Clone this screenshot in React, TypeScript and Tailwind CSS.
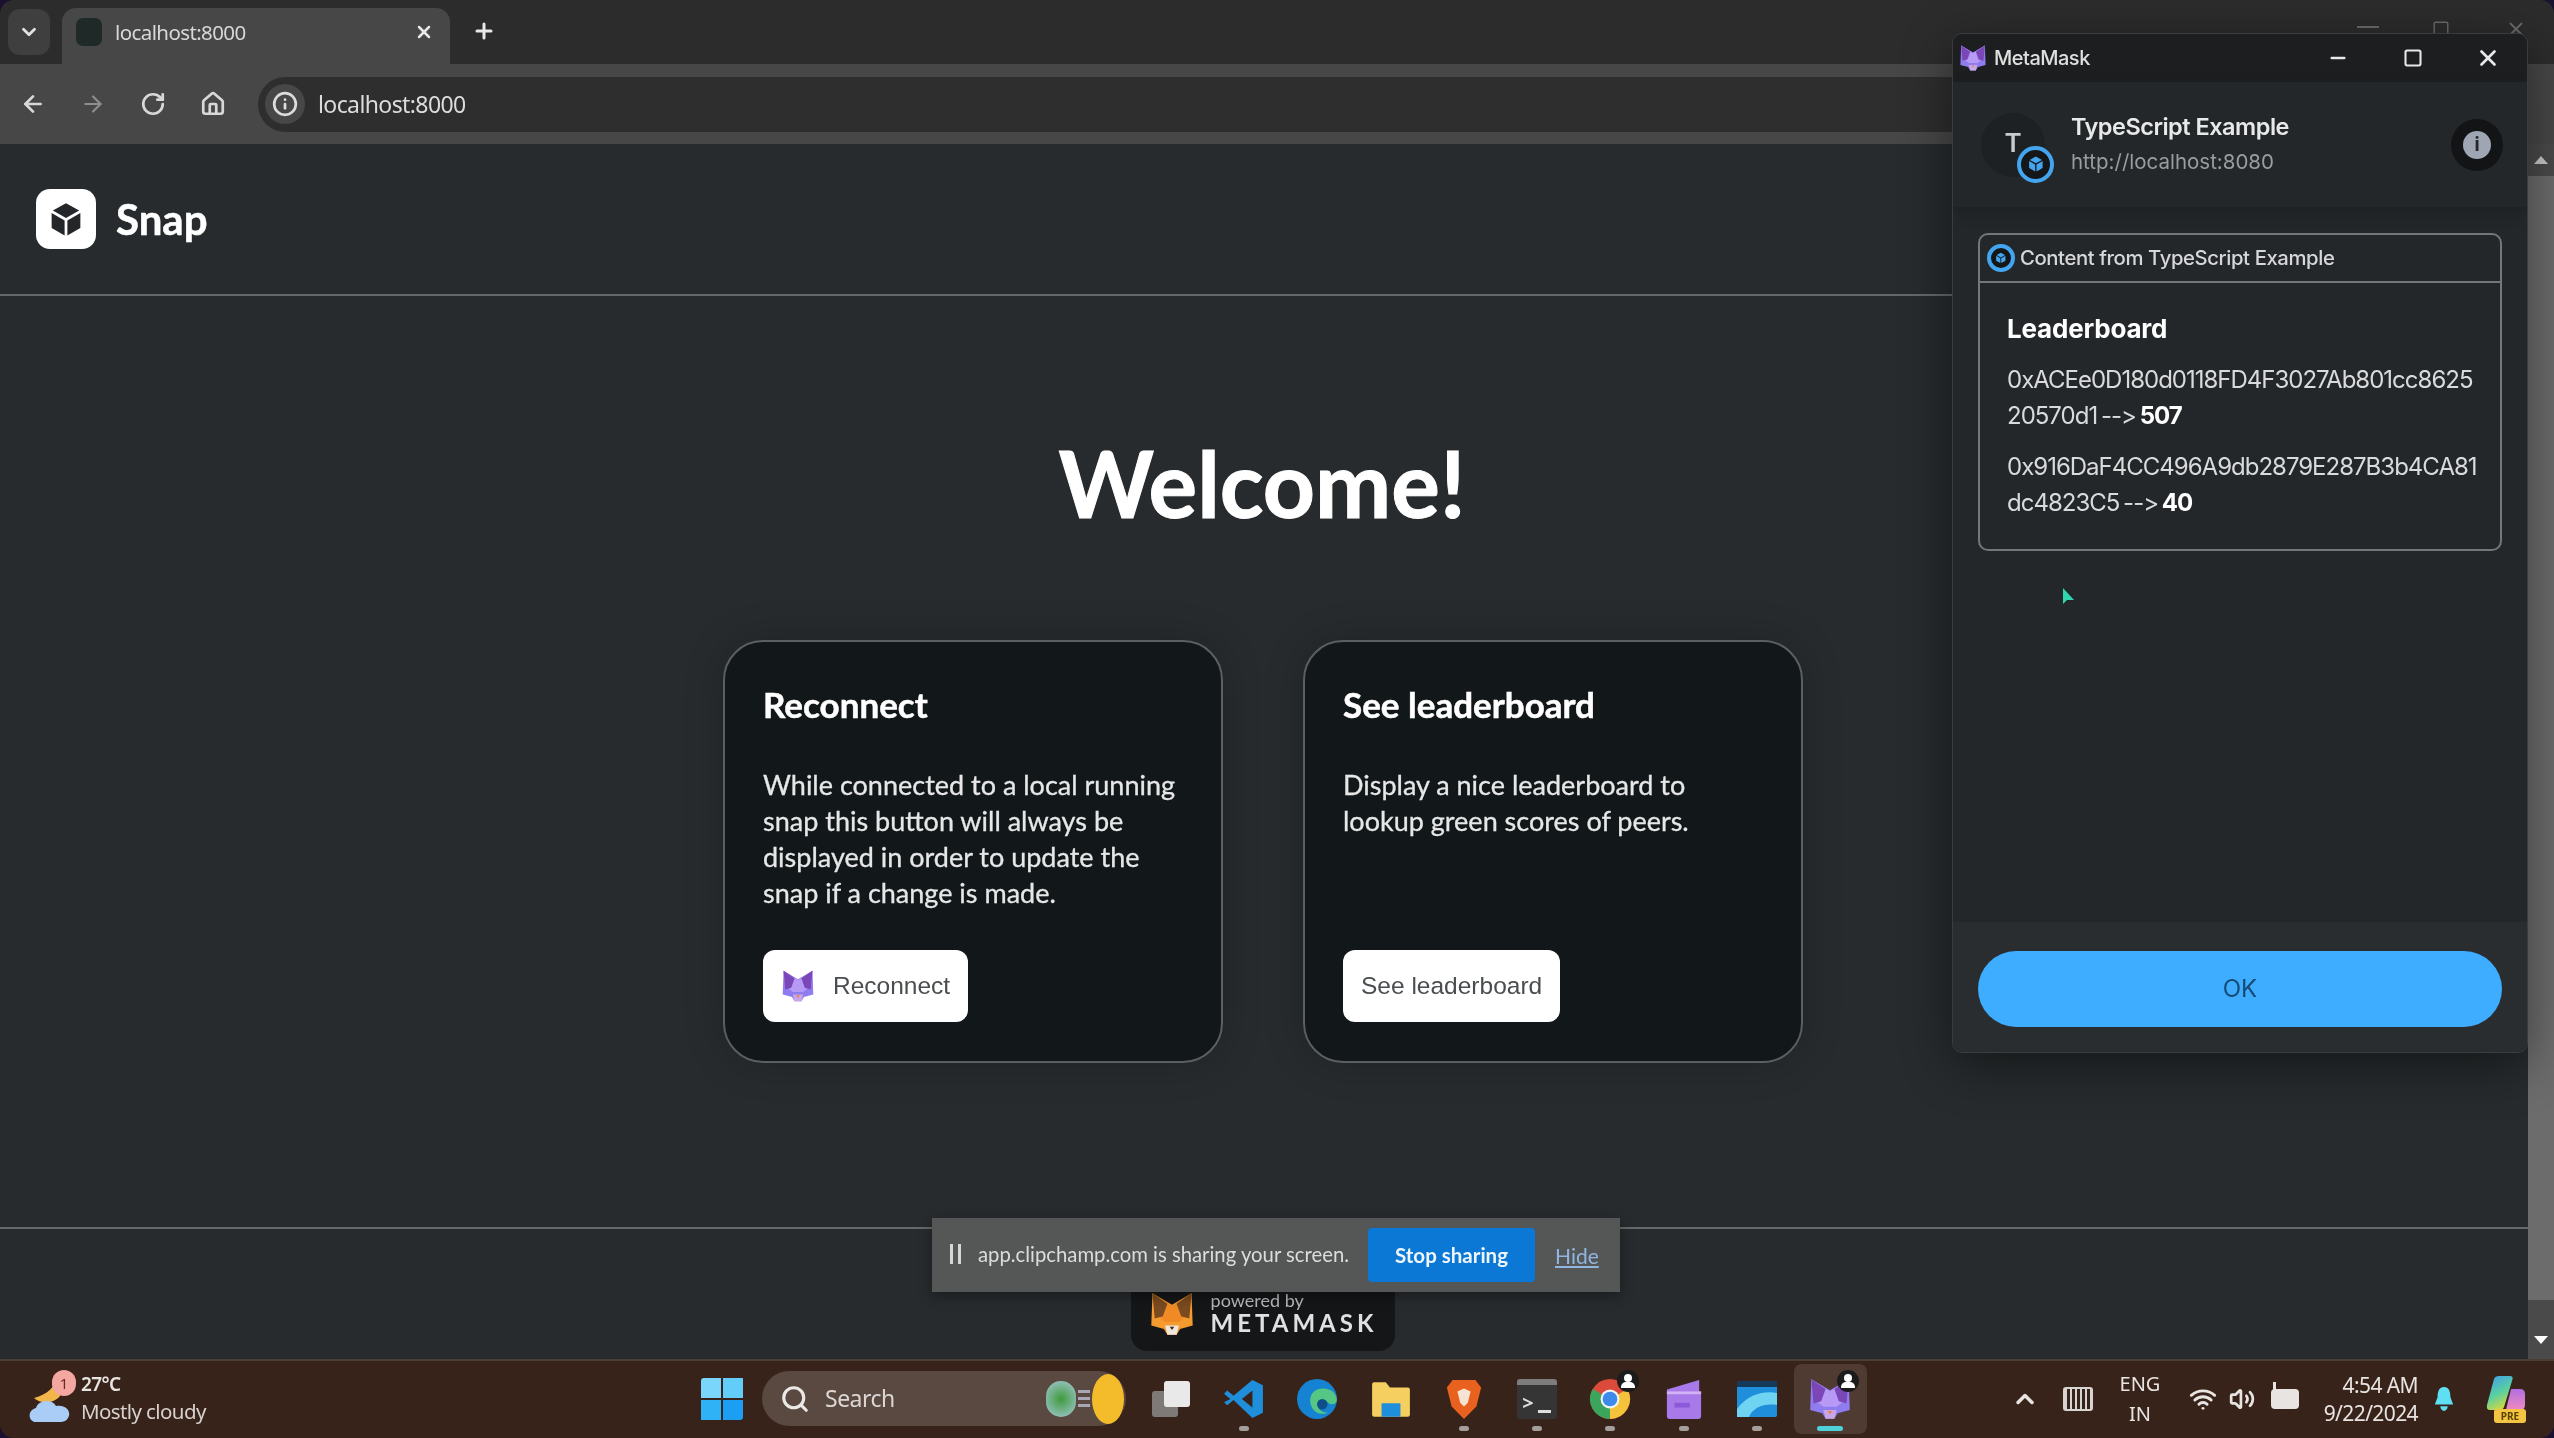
import { ArrowLeft, ArrowRight, ChevronDown, ChevronUp, Home, Info, Minus, Plus, RotateCw, Search, Square, Volume2, Wifi, X } from "lucide-react";

function CubeIcon({ className, color }: { className: string; color: string }) {
  return (
    <svg viewBox="0 0 24 24" className={className}>
      <polygon points="12,3 19.5,7.2 12,11.4 4.5,7.2" fill={color} />
      <polygon points="3.8,8.6 11.2,12.8 11.2,21.4 3.8,17.1" fill={color} />
      <polygon points="20.2,8.6 12.8,12.8 12.8,21.4 20.2,17.1" fill={color} />
    </svg>
  );
}

function FoxIcon({ className, orange }: { className: string; orange?: boolean }) {
  const ear = orange ? "#7a4a20" : "#7b46b8";
  const face = orange ? "#ef8a24" : "#b79af5";
  const low = orange ? "#f59a2e" : "#8f7df0";
  const muzzle = orange ? "#efe6dc" : "#c9a6e8";
  const nose = orange ? "#3a2a20" : "#ef7f3a";
  return (
    <svg viewBox="0 0 40 40" className={className}>
      <polygon points="3,2 20,12 37,2 38,30 27,33 24,38 16,38 13,33 2,30" fill={low} />
      <polygon points="3,2 20,13 37,2 35,20 26,27 14,27 5,20" fill={face} />
      <polygon points="3,2 16,11 12,22 5,24" fill={ear} />
      <polygon points="37,2 24,11 28,22 35,24" fill={ear} />
      <polygon points="14,30 26,30 24,38 16,38" fill={muzzle} />
      <polygon points="18,31 22,31 20,34" fill={nose} />
    </svg>
  );
}

function SnapBadge({ size }: { size: string }) {
  return (
    <div className={`${size} flex items-center justify-center rounded-full bg-[#141618] border-[4px] border-[#43a5f0]`}>
      <CubeIcon className="w-[68%] h-[68%]" color="#43a5f0" />
    </div>
  );
}

function ActionCard({ title, lines, button, fox }: { title: string; lines: string[]; button: string; fox?: boolean }) {
  return (
    <div className="w-[500px] h-[423px] rounded-[40px] border-2 border-[#5c5f61] bg-[#12171a] px-[38px] pt-[40px] shadow-[0_0_40px_rgba(0,0,0,0.18)] flex flex-col items-start">
      <h2 className="text-[35px] leading-[44px] font-bold text-white [-webkit-text-stroke:0.5px_white]">{title}</h2>
      <div className="mt-[41px] h-[144px] text-[27px] leading-[36px] text-[#e6e7e7] [-webkit-text-stroke:0.3px_#e6e7e7]">
        {lines.map((line) => (
          <p key={line}>{line}</p>
        ))}
      </div>
      <button className="mt-[39px] h-[72px] rounded-[12px] bg-white flex items-center px-[18px] text-[24.5px] text-[#4a4d4f] [font-family:'Liberation_Sans',sans-serif]">
        {fox && <FoxIcon className="w-[34px] h-[34px] mr-[18px]" />}
        {button}
      </button>
    </div>
  );
}

function TaskIcon({ children, dot, active }: { children: React.ReactNode; dot?: boolean; active?: boolean }) {
  return (
    <div className={`relative w-[73.3px] h-[70px] flex items-center justify-center rounded-[8px] ${active ? "bg-[#503b33]" : ""}`}>
      {children}
      {dot && <span className="absolute bottom-[3px] w-[10px] h-[5px] rounded-full bg-[#a59f9b]" />}
      {active && <span className="absolute bottom-[3px] w-[26px] h-[5px] rounded-full bg-[#4fd1d9]" />}
    </div>
  );
}

function ProfileBadge() {
  return (
    <span className="absolute right-[8px] top-[6px] w-[22px] h-[22px] rounded-full bg-[#1b1b1b] flex flex-col items-center justify-center">
      <span className="w-[8px] h-[8px] rounded-full bg-white" />
      <span className="w-[14px] h-[6px] rounded-t-[5px] bg-white" />
    </span>
  );
}

export default function App() {
  return (
    <div className="relative w-[2554px] h-[1438px] overflow-hidden bg-[#1a1030] flex flex-col blur-[0.6px] [font-family:Lato,sans-serif]">
      {/* browser chrome */}
      <div className="h-[64px] bg-[#2c2c2c] flex items-end pl-[8px] rounded-t-[14px]">
        <div className="w-[42px] h-[46px] mb-[9px] rounded-[12px] bg-[#3f3f3f] flex items-center justify-center">
          <ChevronDown className="w-[22px] h-[22px] text-[#e2e2e2]" strokeWidth={3} />
        </div>
        <div className="ml-[12px] w-[388px] h-[56px] rounded-t-[14px] bg-[#474747] flex items-center pl-[14px] pr-[16px] pb-[8px]">
          <span className="w-[26px] h-[28px] rounded-[7px] bg-[#1f2a28]" />
          <span className="ml-[13px] text-[20.5px] tracking-[-0.6px] text-[#d8d8d8] [font-family:'Noto_Sans',sans-serif]">localhost:8000</span>
          <X className="ml-auto w-[20px] h-[20px] text-[#e8e8e8]" strokeWidth={3} />
        </div>
        <Plus className="ml-[22px] mb-[21px] w-[24px] h-[24px] text-[#e8e8e8]" strokeWidth={3} />
      </div>
      <div className="h-[80px] bg-[#474747] flex items-center pl-[20px] pr-[110px]">
        <ArrowLeft className="w-[26px] h-[26px] text-[#d8d8d8]" strokeWidth={2.5} />
        <ArrowRight className="ml-[34px] w-[26px] h-[26px] text-[#8e8e8e]" strokeWidth={2} />
        <RotateCw className="ml-[34px] w-[26px] h-[26px] text-[#d8d8d8]" strokeWidth={2.5} />
        <Home className="ml-[34px] w-[26px] h-[26px] text-[#d8d8d8]" strokeWidth={2.5} />
        <div className="ml-[32px] flex-1 h-[55px] rounded-full bg-[#2e2e2e] flex items-center pl-[7px]">
          <span className="w-[40px] h-[40px] rounded-full bg-[#474747] flex items-center justify-center">
            <Info className="w-[26px] h-[26px] text-[#dcdcdc]" strokeWidth={2.5} />
          </span>
          <span className="ml-[13px] text-[23px] tracking-[-0.6px] text-[#dcdcdc] [font-family:'Noto_Sans',sans-serif]">localhost:8000</span>
        </div>
      </div>

      {/* page + scrollbar */}
      <div className="flex-1 flex min-h-0">
        <div className="flex-1 bg-[#272b2d] flex flex-col">
          <header className="h-[152px] border-b-2 border-[#64686a] flex items-center pl-[36px]">
            <div className="w-[60px] h-[60px] rounded-[14px] bg-white flex items-center justify-center">
              <CubeIcon className="w-[42px] h-[42px]" color="#24272a" />
            </div>
            <span className="ml-[20px] text-[42px] font-bold text-white [-webkit-text-stroke:0.5px_white]">Snap</span>
          </header>
          <main className="flex-1 flex flex-col items-center">
            <h1 className="mt-[132px] -ml-[4px] text-[91px] leading-[110px] font-bold text-white [-webkit-text-stroke:1px_white]">Welcome!</h1>
            <div className="mt-[102px] -ml-[2px] flex gap-[80px]">
              <ActionCard
                title="Reconnect"
                lines={["While connected to a local running", "snap this button will always be", "displayed in order to update the", "snap if a change is made."]}
                button="Reconnect"
                fox
              />
              <ActionCard
                title="See leaderboard"
                lines={["Display a nice leaderboard to", "lookup green scores of peers."]}
                button="See leaderboard"
              />
            </div>
          </main>
          <footer className="h-[132px] border-t-2 border-[#64686a] flex justify-center items-end pb-[8px]">
            <div className="w-[264px] h-[80px] -ml-[2px] rounded-b-[16px] bg-[#141618] flex items-end justify-center pb-[14px] gap-[16px]">
              <FoxIcon className="w-[46px] h-[46px]" orange />
              <div className="flex flex-col text-[#dfe0e0]">
                <span className="text-[18px] leading-[18px] text-[#b8b8b8]">powered by</span>
                <span className="text-[24px] leading-[28px] font-bold tracking-[4px]">METAMASK</span>
              </div>
            </div>
          </footer>
        </div>
        <div className="w-[26px] bg-[#4a4a4a] flex flex-col items-center">
          <span className="mt-[12px] w-0 h-0 border-x-[7px] border-x-transparent border-b-[8px] border-b-[#c8c8c8]" />
          <span className="mt-[12px] w-full h-[1124px] bg-[#6c6c6c]" />
          <span className="mt-[36px] w-0 h-0 border-x-[7px] border-x-transparent border-t-[8px] border-t-white" />
        </div>
      </div>

      {/* taskbar */}
      <div className="h-[79px] pb-[2px] bg-[#38231b] border-t-2 border-[#4b3e38] flex items-center text-[#e8e4e1] rounded-b-[14px] [font-family:'Noto_Sans',sans-serif]">
        <div className="w-[701px] flex items-center pl-[28px]">
          <div className="relative w-[44px] h-[50px]">
            <svg viewBox="0 0 44 50" className="absolute inset-0 w-[44px] h-[50px]">
              <path d="M30 2 C26 14 20 20 6 24 C12 30 26 30 32 22Z" fill="#f3b64b" />
              <path d="M8 48 C0 48 -1 36 8 34 C10 26 24 24 28 32 C38 30 44 38 40 44 C38 48 34 48 30 48Z" fill="#a9cdf7" />
            </svg>
            <span className="absolute left-[24px] -top-[4px] w-[24px] h-[26px] rounded-full bg-[#f4a6a0] text-[#6a2a26] text-[15px] leading-[26px] text-center">1</span>
          </div>
          <div className="ml-[9px] flex flex-col -mt-[2px]">
            <span className="text-[19px] leading-[27px] font-semibold tracking-[-0.6px]">27°C</span>
            <span className="text-[20.5px] leading-[27px] text-[#d6d2cf] tracking-[-0.6px]">Mostly cloudy</span>
          </div>
        </div>
        <div className="w-[42px] h-[42px] grid grid-cols-2 gap-[2px]">
          <span className="bg-[#7ad7fb] rounded-tl-[3px]" />
          <span className="bg-[#62cdf9]" />
          <span className="bg-[#2fb3f6]" />
          <span className="bg-[#1c9ff2] rounded-br-[3px]" />
        </div>
        <div className="ml-[19px] w-[364px] h-[55px] rounded-full bg-[#5a4941] flex items-center pl-[18px]">
          <Search className="w-[30px] h-[30px] text-[#ece8e6]" strokeWidth={2.5} />
          <span className="ml-[15px] text-[23px] tracking-[-0.5px] text-[#dcd7d4]">Search</span>
          <div className="ml-auto flex items-center pr-[2px]">
            <span className="w-[30px] h-[36px] rounded-full bg-[radial-gradient(circle,#3f9b3c,#a8c9dc)]" />
            <span className="ml-[2px] flex flex-col gap-[4px]">
              <span className="w-[12px] h-[3px] bg-[#a9a6b5]" />
              <span className="w-[12px] h-[3px] bg-[#a9a6b5]" />
              <span className="w-[12px] h-[3px] bg-[#a9a6b5]" />
            </span>
            <span className="ml-[2px] w-[32px] h-[50px] rounded-[50%] bg-[#f4bb2a]" />
          </div>
        </div>
        <div className="ml-[8px] flex items-center">
          <TaskIcon>
            <div className="relative w-[38px] h-[36px]">
              <span className="absolute left-0 bottom-0 w-[26px] h-[26px] rounded-[3px] bg-[#7d7a78]" />
              <span className="absolute right-0 top-0 w-[26px] h-[26px] rounded-[3px] bg-[#e9e9e9]" />
            </div>
          </TaskIcon>
          <TaskIcon dot>
            <svg viewBox="0 0 40 40" className="w-[42px] h-[42px]">
              <path d="M28 2 L38 7 V33 L28 38 L10 21 L4 26 L1 23 L7 20 L1 15 L4 12 L10 17 Z M28 12 L18 20 L28 28 Z" fill="#1f8fdc" fillRule="evenodd" />
            </svg>
          </TaskIcon>
          <TaskIcon>
            <svg viewBox="0 0 40 40" className="w-[42px] h-[42px]">
              <circle cx="20" cy="20" r="19" fill="#1583d1" />
              <path d="M39 21 C38 12 31 10 25 10 C16 10 12 18 14 25 C16 33 24 36 30 33 C24 33 20 29 21 25 C22 21 27 20 30 23 C33 26 38 26 39 21Z" fill="#55c684" />
              <circle cx="25" cy="25" r="5" fill="#0e4f8a" />
            </svg>
          </TaskIcon>
          <TaskIcon>
            <svg viewBox="0 0 40 40" className="w-[42px] h-[42px]">
              <path d="M2 6 a2 2 0 0 1 2 -2 h11 l4 5 h17 a2 2 0 0 1 2 2 v24 a2 2 0 0 1 -2 2 h-32 a2 2 0 0 1 -2 -2z" fill="#f5cf5f" />
              <rect x="11" y="24" width="18" height="13" rx="1" fill="#1f8fdc" />
            </svg>
          </TaskIcon>
          <TaskIcon dot>
            <svg viewBox="0 0 40 44" className="w-[38px] h-[44px]">
              <path d="M8 2 H32 L38 10 L33 30 L20 43 L7 30 L2 10 Z" fill="#e8611f" />
              <path d="M13 14 L20 11 L27 14 L24 26 L20 30 L16 26 Z" fill="#f7e3d3" />
            </svg>
          </TaskIcon>
          <TaskIcon dot>
            <div className="w-[40px] h-[40px] rounded-[3px] bg-[#353535] border-t-[6px] border-[#7d7d7d] relative">
              <span className="absolute left-[5px] top-[8px] text-[20px] leading-[20px] font-bold text-[#dedede]">&gt;</span>
              <span className="absolute right-[6px] bottom-[6px] w-[13px] h-[3px] bg-[#dedede]" />
            </div>
          </TaskIcon>
          <TaskIcon dot>
            <svg viewBox="0 0 40 40" className="w-[42px] h-[42px]">
              <circle cx="20" cy="20" r="19" fill="#dc4a3c" />
              <path d="M20 20 L36.5 10.5 A19 19 0 0 1 20 39 Z" fill="#f5c33b" />
              <path d="M20 20 L20 39 A19 19 0 0 1 3.5 10.5 Z" fill="#3ba55c" />
              <circle cx="20" cy="20" r="9" fill="#f4f4f4" />
              <circle cx="20" cy="20" r="7" fill="#3c8bea" />
            </svg>
            <ProfileBadge />
          </TaskIcon>
          <TaskIcon dot>
            <svg viewBox="0 0 40 44" className="w-[38px] h-[44px]">
              <path d="M2 12 L36 2 V14 H38 V40 a3 3 0 0 1 -3 3 H5 a3 3 0 0 1 -3 -3Z" fill="#a779e9" />
              <rect x="2" y="14" width="36" height="3" fill="#d0b2f5" />
              <rect x="10" y="26" width="16" height="5" fill="#8a5ad9" />
            </svg>
          </TaskIcon>
          <TaskIcon dot>
            <svg viewBox="0 0 40 40" className="w-[42px] h-[40px]">
              <rect x="0" y="2" width="40" height="36" rx="2" fill="#1f8fdc" />
              <rect x="0" y="2" width="40" height="6" fill="#15395a" />
              <path d="M0 38 V30 C12 14 28 12 40 14 V26 C28 24 16 28 12 38Z" fill="#6fd3f2" />
            </svg>
          </TaskIcon>
          <TaskIcon active>
            <FoxIcon className="w-[44px] h-[50px]" />
            <ProfileBadge />
          </TaskIcon>
        </div>
        <div className="ml-auto flex items-center pr-[28px]">
          <ChevronUp className="w-[28px] h-[28px]" strokeWidth={3} />
          <div className="ml-[24px] w-[30px] h-[24px] rounded-[3px] border-2 border-[#d8d4d1] bg-[repeating-linear-gradient(90deg,#d8d4d1_0_2px,transparent_2px_5px)]" />
          <div className="ml-[20px] w-[54px] flex flex-col items-center text-[20px] leading-[30px]">
            <span>ENG</span>
            <span>IN</span>
          </div>
          <Wifi className="ml-[22px] w-[28px] h-[28px]" strokeWidth={2.5} />
          <Volume2 className="ml-[12px] w-[26px] h-[26px]" strokeWidth={2.5} />
          <div className="relative ml-[16px] w-[28px] h-[20px] rounded-[4px] bg-[#e8e4e1]">
            <span className="absolute -top-[7px] left-[2px] w-[3px] h-[8px] bg-[#e8e4e1]" />
          </div>
          <div className="ml-[17px] w-[102px] flex flex-col items-end text-[21px] leading-[28px] whitespace-nowrap tracking-[-0.6px]">
            <span>4:54 AM</span>
            <span>9/22/2024</span>
          </div>
          <svg viewBox="0 0 24 28" className="ml-[15px] w-[22px] h-[30px]">
            <path d="M12 1 C6 1 5 7 5 12 L2 20 H22 L19 12 C19 7 18 1 12 1Z M8 22 H16 C16 25 14 27 12 27 C10 27 8 25 8 22Z" fill="#5fe0f2" />
          </svg>
          <div className="relative ml-[31px] w-[40px] h-[48px]">
            <svg viewBox="0 0 40 48" className="absolute inset-0 w-[40px] h-[48px]">
              <defs>
                <linearGradient id="copilotLeft" x1="0" y1="0" x2="0.4" y2="1">
                  <stop offset="0" stopColor="#3f9cf0" />
                  <stop offset="0.6" stopColor="#5ad0a0" />
                  <stop offset="1" stopColor="#c8d84a" />
                </linearGradient>
                <linearGradient id="copilotRight" x1="0" y1="0" x2="0" y2="1">
                  <stop offset="0" stopColor="#b06fe0" />
                  <stop offset="1" stopColor="#f08ac0" />
                </linearGradient>
              </defs>
              <path d="M8 4 Q9 1 13 1 H24 Q28 1 26 6 L18 32 Q17 35 13 35 H4 Q0 35 1 30Z" fill="url(#copilotLeft)" />
              <path d="M25 14 H34 Q39 14 39 19 V30 Q39 35 34 35 H20Z" fill="url(#copilotRight)" />
            </svg>
            <span className="absolute left-[8px] bottom-0 w-[32px] h-[14px] rounded-[3px] bg-[#f4c542] text-[10px] leading-[14px] font-bold text-center text-[#5a4200]">PRE</span>
          </div>
        </div>
      </div>

      {/* browser window controls behind the popup */}
      <div className="absolute top-[26px] left-[2357px] w-[22px] h-[2px] bg-[#6a6a6a]" />
      <Square className="absolute top-[20px] left-[2432px] w-[18px] h-[18px] text-[#6a6a6a]" />
      <X className="absolute top-[18px] left-[2505px] w-[22px] h-[22px] text-[#6a6a6a]" />

      {/* MetaMask popup */}
      <div className="absolute left-[1952px] top-[33px] w-[576px] h-[1020px] rounded-[10px] border border-[#3a3d3f] bg-[#24272a] shadow-[0_12px_50px_rgba(0,0,0,0.45)] flex flex-col overflow-hidden text-white [font-family:Inter,sans-serif]">
        <div className="h-[48px] bg-[#1c1e20] flex items-center pl-[6px] shrink-0">
          <FoxIcon className="w-[28px] h-[28px]" />
          <span className="ml-[7px] text-[20px] tracking-[-0.5px] font-medium text-[#dfe0e0]">MetaMask</span>
          <Minus className="ml-auto w-[22px] h-[22px] text-[#e8e8e8]" strokeWidth={2.5} />
          <Square className="ml-[54px] w-[20px] h-[20px] text-[#e8e8e8]" strokeWidth={2.5} />
          <X className="ml-[52px] mr-[26px] w-[26px] h-[26px] text-[#e8e8e8]" strokeWidth={2.5} />
        </div>
        <div className="h-[125px] flex items-center pl-[28px] pr-[24px] shrink-0 shadow-[0_6px_14px_rgba(0,0,0,0.2)]">
          <div className="relative w-[64px] h-[64px] rounded-full bg-[#1e2123] flex items-center justify-center">
            <span className="text-[26px] font-semibold text-[#c9caca] -mt-[4px]">T</span>
            <div className="absolute -right-[9px] -bottom-[6px]">
              <SnapBadge size="w-[37px] h-[37px]" />
            </div>
          </div>
          <div className="ml-[26px] flex flex-col">
            <span className="text-[23.5px] leading-[34px] font-semibold tracking-[-0.5px] text-[#e8e9e9]">TypeScript Example</span>
            <span className="text-[20.5px] leading-[36px] text-[#9a9c9e]">http://localhost:8080</span>
          </div>
          <div className="ml-auto w-[52px] h-[52px] rounded-full bg-[#121416] flex items-center justify-center">
            <span className="w-[28px] h-[28px] rounded-full bg-[#9ea6b4] text-[#24272a] text-[19px] leading-[28px] font-bold text-center">i</span>
          </div>
        </div>
        <div className="flex-1 px-[25px] pt-[26px]">
          <div className="h-[318px] rounded-[10px] border-2 border-[#73767a]">
            <div className="h-[48px] border-b-2 border-[#73767a] flex items-center pl-[7px]">
              <SnapBadge size="w-[28px] h-[28px]" />
              <span className="ml-[5px] text-[20.3px] font-medium tracking-[-0.4px] text-[#d6d7d8]">Content from TypeScript Example</span>
            </div>
            <div className="px-[27px] pt-[28px] text-[24px] leading-[36px] tracking-[-1px] [word-spacing:-2px] text-[#d9dadb]">
              <h3 className="text-[26px] font-bold tracking-[-0.2px] text-white leading-[36px]">Leaderboard</h3>
              <p className="mt-[15px]">0xACEe0D180d0118FD4F3027Ab801cc8625<br />20570d1 --&gt; <b className="text-white">507</b></p>
              <p className="mt-[15px]">0x916DaF4CC496A9db2879E287B3b4CA81<br />dc4823C5 --&gt; <b className="text-white">40</b></p>
            </div>
          </div>
        </div>
        <div className="h-[130px] bg-[#2a2d2f] px-[25px] pt-[29px] shrink-0">
          <button className="w-full h-[76px] rounded-full bg-[#3fadff] text-[24px] text-[#154a75]">OK</button>
        </div>
      </div>

      {/* cursor */}
      <svg viewBox="0 0 14 20" className="absolute left-[2062px] top-[587px] w-[14px] h-[20px]">
        <path d="M1 1 L1 17 L5 13 L12 13 Z" fill="#2fd6b0" />
      </svg>

      {/* screen sharing notice */}
      <div className="absolute left-[932px] top-[1218px] w-[688px] h-[74px] bg-[#555756] shadow-[0_4px_12px_rgba(0,0,0,0.35)] flex items-center pl-[18px] pb-[2px] [font-family:Lato,sans-serif]">
        <span className="w-[3px] h-[20px] bg-[#d6d6d6]" />
        <span className="ml-[5px] w-[3px] h-[20px] bg-[#d6d6d6]" />
        <span className="ml-[17px] text-[20.3px] text-[#dcdcdc]">app.clipchamp.com is sharing your screen.</span>
        <button className="absolute left-[436px] top-[10px] w-[167px] h-[54px] rounded-[4px] bg-[#0a78d4] text-[20.5px] font-bold text-[#eef6fc]">Stop sharing</button>
        <span className="absolute left-[623px] top-[22px] text-[21px] underline text-[#8fb5e0]">Hide</span>
      </div>
    </div>
  );
}
